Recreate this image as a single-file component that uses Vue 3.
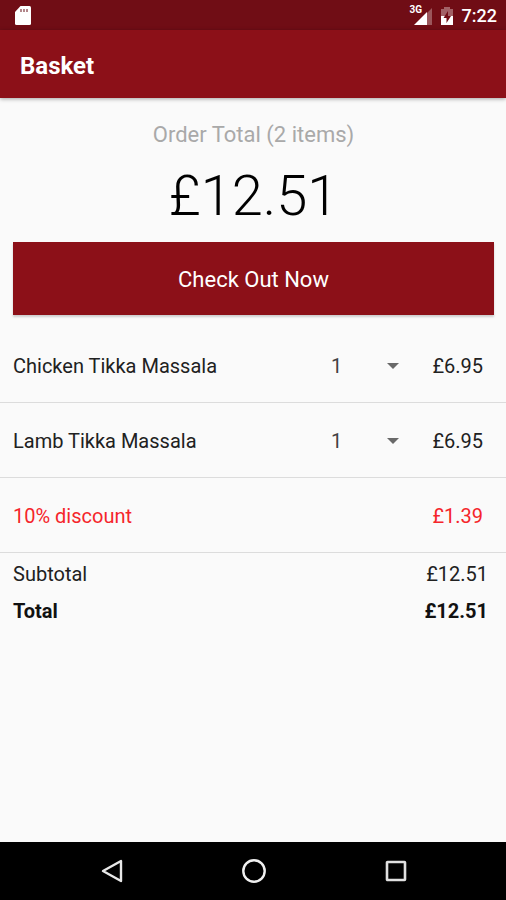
<script setup>
import { ref } from 'vue'

const items = ref([
  { id: 'chicken', name: 'Chicken Tikka Massala', quantity: 1, price: '£6.95' },
  { id: 'lamb', name: 'Lamb Tikka Massala', quantity: 1, price: '£6.95' },
])
const quantities = [1, 2, 3, 4, 5]
</script>

<template>
  <div class="screen">
    <div class="status">
      <svg class="sd" width="18" height="20" viewBox="0 0 18 20" aria-hidden="true">
        <path d="M6.500 0h9a1.500 1.500 0 0 1 1.500 1.500v16a1.500 1.500 0 0 1-1.500 1.500h-13a1.500 1.500 0 0 1-1.500-1.500V6z" fill="#fff" />
        <path d="M7 3v3M10 3v3M13 3v3" stroke="#9a6066" stroke-width="1.500" />
      </svg>
      <div class="indicators">
        <span class="signal">
          <span class="network">3G</span>
          <svg width="18" height="17" viewBox="0 0 18 17" aria-hidden="true">
            <path d="M18 0v17H1z" fill="#fff" fill-opacity=".3" />
            <path d="M13 4v13H0z" fill="#fff" />
          </svg>
        </span>
        <svg width="12" height="18" viewBox="0 0 12 18" aria-hidden="true">
          <path d="M0 2h3V0h6v2h3v7H0z" fill="#fff" fill-opacity=".35" />
          <path d="M0 9h12v9H0z" fill="#fff" />
          <path d="M7 4 2.500 11H5.500v5L10 9H7z" fill="#700d15" />
        </svg>
        <span class="clock">7:22</span>
      </div>
    </div>

    <header class="bar">
      <h1>Basket</h1>
    </header>

    <main class="content">
      <section class="summary">
        <p class="caption">Order Total (2 items)</p>
        <p class="amount">£12.51</p>
        <button type="button" class="checkout">Check Out Now</button>
      </section>

      <ul class="lines">
        <li v-for="item in items" :key="item.id" class="line">
          <label class="name" :for="item.id">{{ item.name }}</label>
          <span class="picker">
            <select :id="item.id" v-model="item.quantity">
              <option v-for="n in quantities" :key="n" :value="n">{{ n }}</option>
            </select>
            <svg class="caret" width="12" height="6" viewBox="0 0 12 6" aria-hidden="true">
              <path d="M0 0h12L6 6z" fill="#696969" />
            </svg>
          </span>
          <span class="price">{{ item.price }}</span>
        </li>
        <li class="line discount">
          <span class="name">10% discount</span>
          <span class="price">£1.39</span>
        </li>
      </ul>

      <dl class="totals">
        <div class="sum">
          <dt>Subtotal</dt>
          <dd>£12.51</dd>
        </div>
        <div class="sum grand">
          <dt>Total</dt>
          <dd>£12.51</dd>
        </div>
      </dl>
    </main>

    <nav class="keys">
      <button type="button" aria-label="Back">
        <svg width="24" height="24" viewBox="0 0 24 24">
          <path d="M21 2v20L3 12z" fill="none" stroke="#e8e8e8" stroke-width="2.400" stroke-linejoin="round" />
        </svg>
      </button>
      <button type="button" aria-label="Home">
        <svg width="24" height="24" viewBox="0 0 24 24">
          <circle cx="12" cy="12" r="10.700" fill="none" stroke="#f0f0f0" stroke-width="2.400" />
        </svg>
      </button>
      <button type="button" aria-label="Recent apps">
        <svg width="24" height="24" viewBox="0 0 24 24">
          <rect x="3" y="3" width="18" height="18" rx=".5" fill="none" stroke="#e0e0e0" stroke-width="2.600" />
        </svg>
      </button>
    </nav>
  </div>
</template>

<style>
body {
  margin: 0;
  background: #fafafa;
}
</style>

<style scoped>
.screen {
  display: flex;
  flex-direction: column;
  min-height: 100vh;
  background: #fafafa;
  color: #212121;
  font-family: Roboto, "Liberation Sans", sans-serif;
  font-size: 20px;
  line-height: 24px;
}

.status {
  display: flex;
  align-items: center;
  justify-content: space-between;
  height: 30px;
  padding: 2px 9px 0 14px;
  background: #700d15;
  box-sizing: border-box;
  color: #fff;
}

.indicators {
  display: flex;
  align-items: center;
  gap: 9px;
}

.signal {
  position: relative;
  display: flex;
}

.network {
  position: absolute;
  top: -3px;
  left: -4px;
  font-size: 10px;
  font-weight: 700;
  line-height: 10px;
}

.clock {
  font-size: 18px;
  font-weight: 500;
}

.bar {
  display: flex;
  align-items: center;
  height: 68px;
  padding: 0 20px;
  background: #8c1018;
  box-shadow: 0 1px 4px rgba(0, 0, 0, 0.35);
  color: #fff;
}

h1 {
  margin: 4px 0 0;
  font-size: 24px;
  font-weight: 700;
  line-height: 32px;
}

.content {
  flex: 1;
}

.summary {
  display: flex;
  flex-direction: column;
  padding: 21px 12px 13px 13px;
  text-align: center;
}

.caption {
  margin: 0;
  color: #a9a9a9;
  font-size: 22px;
  line-height: 32px;
}

.amount {
  margin: 11px 0 12px;
  color: #000;
  font-size: 56px;
  font-weight: 300;
  line-height: 68px;
}

.checkout {
  height: 73px;
  padding: 2px 0 0;
  border: 0;
  background: #8c1018;
  box-shadow: 0 2px 2px rgba(0, 0, 0, 0.18);
  color: #fff;
  font: inherit;
  font-size: 22px;
}

.lines {
  margin: 0;
  padding: 0;
  list-style: none;
}

.line {
  display: flex;
  align-items: center;
  height: 75px;
  padding: 2px 23px 0 13px;
  border-bottom: 1px solid #dcdcdc;
  box-sizing: border-box;
}

.name {
  flex: 1;
}

.picker {
  display: flex;
  align-items: center;
  position: relative;
  width: 68px;
}

select {
  width: 100%;
  margin: 0;
  padding: 0;
  border: 0;
  appearance: none;
  background: transparent;
  color: #424242;
  font: inherit;
}

.caret {
  position: absolute;
  right: 0;
  pointer-events: none;
}

.price {
  width: 84px;
  text-align: right;
}

.discount {
  color: #f5252b;
}

.totals {
  margin: 0;
  padding: 2px 18px 0 13px;
}

.sum {
  display: flex;
  align-items: center;
  justify-content: space-between;
  height: 37px;
}

dd {
  margin: 0;
}

.grand {
  color: #111;
  font-weight: 700;
}

.keys {
  display: flex;
  justify-content: center;
  gap: 94px;
  height: 58px;
  padding-left: 1px;
  background: #000;
}

.keys button {
  display: flex;
  align-items: center;
  justify-content: center;
  width: 48px;
  padding: 0;
  border: 0;
  background: transparent;
}
</style>
